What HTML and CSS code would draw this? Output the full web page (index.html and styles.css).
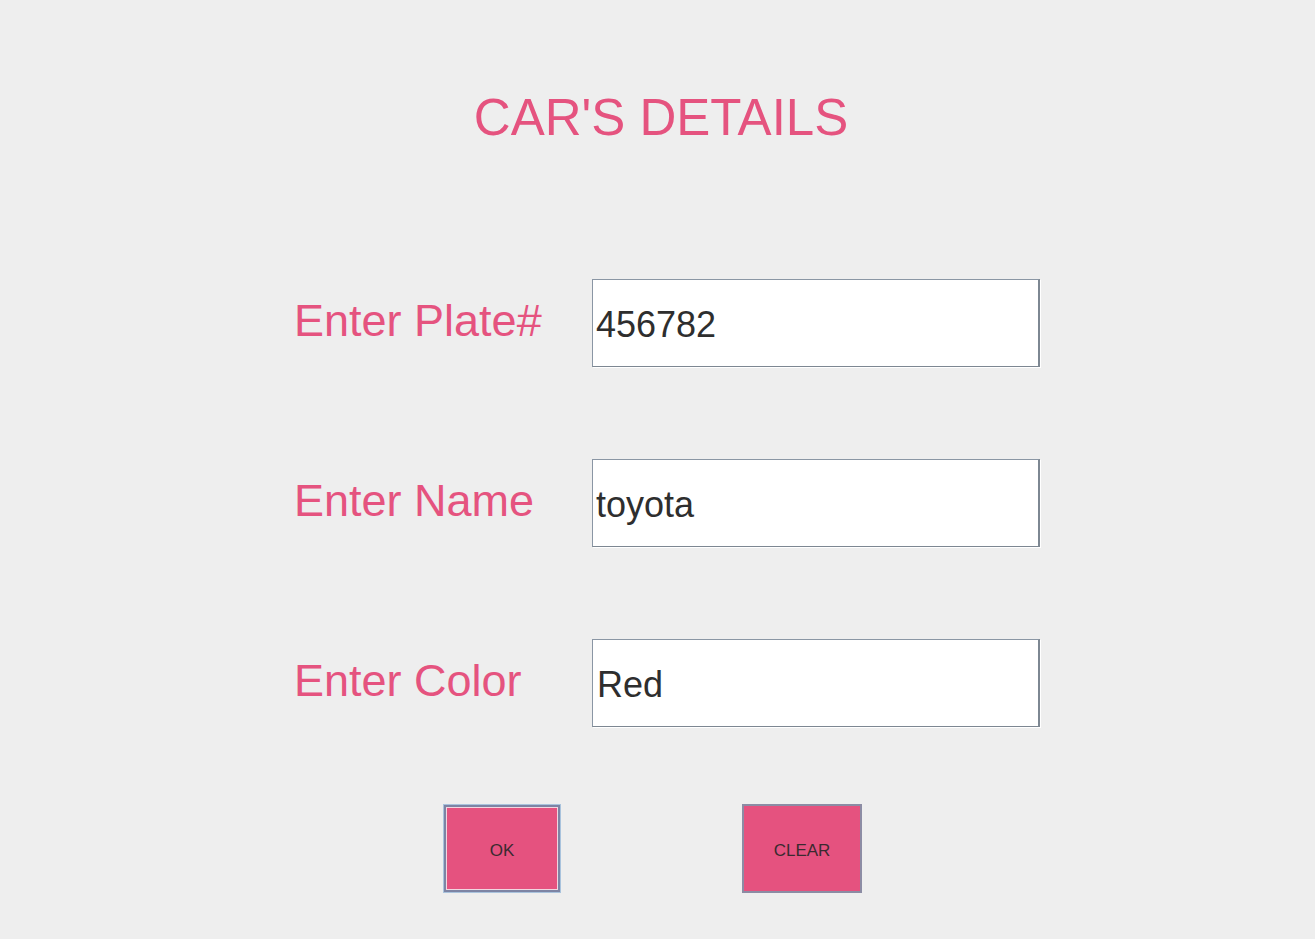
FILE: index.html
```html
<!DOCTYPE html>
<html>
<head>
<meta charset="utf-8">
<title>Car's Details</title>
<link rel="stylesheet" href="styles.css">
</head>
<body>
<div class="page">
  <h1 class="title">CAR'S DETAILS</h1>
  <div class="form">
    <div class="row">
      <label class="label">Enter Plate#</label>
      <div class="field">456782</div>
    </div>
    <div class="row">
      <label class="label">Enter Name</label>
      <div class="field">toyota</div>
    </div>
    <div class="row">
      <label class="label">Enter Color</label>
      <div class="field field-red">Red</div>
    </div>
    <div class="buttons">
      <div class="btn btn-focus">OK</div>
      <div class="btn">CLEAR</div>
    </div>
  </div>
</div>
</body>
</html>
```
FILE: styles.css
```css
html, body {
  margin: 0;
  padding: 0;
  background: #eeeeee;
  font-family: "Liberation Sans", Arial, sans-serif;
}
.page {
  width: 1315px;
  height: 939px;
  padding-top: 88px;
  box-sizing: border-box;
}
.title {
  margin: 0;
  padding-left: 7px;
  text-align: center;
  font-weight: normal;
  font-size: 51px;
  line-height: 60px;
  color: #e5537f;
}
.form {
  margin: 131px 0 0 294px;
  width: 746px;
  display: flex;
  flex-direction: column;
  gap: 92px;
}
.row {
  display: flex;
  height: 88px;
}
.label {
  width: 298px;
  font-size: 45px;
  line-height: 84px;
  color: #e5537f;
}
.field {
  width: 448px;
  height: 88px;
  box-sizing: border-box;
  background: #ffffff;
  border-top: 1px solid #8a96a4;
  border-left: 1px solid #8a96a4;
  border-bottom: 1px solid #7d8792;
  border-right: 2px solid #7d8792;
  box-shadow: 1px 1px 0 #ffffff;
  padding: 3px 0 0 3px;
  display: flex;
  align-items: center;
  font-size: 36px;
  color: #2e2e2e;
}
.field-red {
  padding-left: 4px;
}
.buttons {
  display: flex;
  gap: 181px;
  margin-top: -15px;
  padding-left: 149px;
}
.btn {
  width: 120px;
  height: 89px;
  box-sizing: border-box;
  background: #e5527f;
  border: 2px solid #8c8ca4;
  padding-top: 4px;
  display: flex;
  align-items: center;
  justify-content: center;
  font-size: 17px;
  color: #3a2a30;
}
.btn-focus {
  width: 118px;
  border: 1px solid #a9c3dd;
  box-shadow: inset 0 0 0 2px #7d84a4, inset 0 0 0 3px #f2d6e0;
}
```
